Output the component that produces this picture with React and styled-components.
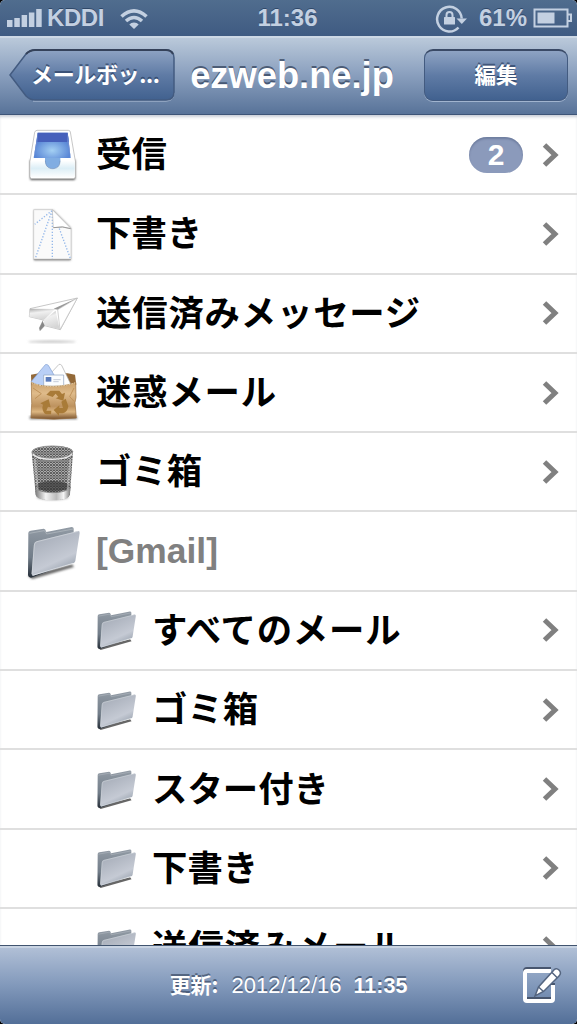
import React from "react";
import styled, { createGlobalStyle } from "styled-components";

const GlobalStyle = createGlobalStyle`
    * { box-sizing: border-box; }
    body {
        margin: 0;
        background: #000;
        font-family: "Liberation Sans", "Noto Sans CJK JP", sans-serif;
    }
`;

const Screen = styled.div`
    width: 577px;
    height: 1024px;
    display: flex;
    flex-direction: column;
    overflow: hidden;
    border-radius: 5px;
    background: #fff;
`;

// status bar
const StatusBar = styled.header`
    height: 36px;
    flex: none;
    display: grid;
    grid-template-columns: 1fr auto 1fr;
    align-items: center;
    padding: 0 5px 0 7px;
    background: linear-gradient(#506d8e, #3f5b82);
    color: #c3d0e1;
    font-size: 24px;
    font-weight: bold;
    line-height: 34px;
    text-shadow: 0 -1px 0 rgba(20, 40, 70, 0.5);
`;
const StatusGroup = styled.div`
    display: flex;
    align-items: center;
    justify-content: ${(props) => (props.$end ? "flex-end" : "flex-start")};
    height: 36px;
`;
const Carrier = styled.span`
    margin: 0 15px 0 5px;
    letter-spacing: -0.4px;
`;
const Clock = styled.span`
    margin-left: -4px;
`;
const Percent = styled.span`
    margin: 0 6px 0 12px;
`;

// navigation bar
const NavBar = styled.nav`
    height: 79px;
    flex: none;
    display: flex;
    align-items: flex-start;
    padding: 11px 9px 0 9px;
    border-top: 2px solid #cdd8e5;
    border-bottom: 1px solid #3e5578;
    background: linear-gradient(#bac9da, #8da2c0 45%, #587399);
`;
const BackButton = styled.button`
    position: relative;
    width: 166px;
    height: 53px;
    padding: 0 0 0 22px;
    border: 0;
    background: none;
    color: #fff;
    font: bold 22px/50px "Noto Sans CJK JP", sans-serif;
    text-align: left;
    white-space: nowrap;
    text-shadow: 0 -2px 0 rgba(35, 55, 90, 0.65);
`;
const BackShape = styled.svg`
    position: absolute;
    left: 0;
    top: 0;
`;
const BackLabel = styled.span`
    position: relative;
    top: -3px;
    letter-spacing: -0.35px;
`;
const Title = styled.h1`
    flex: 1;
    margin: 0;
    padding-right: 15px;
    color: #fff;
    font-size: 36.3px;
    line-height: 54px;
    text-align: center;
    text-shadow: 0 -2px 0 rgba(45, 60, 85, 0.7);
`;
const EditButton = styled.button`
    width: 144px;
    height: 52px;
    padding: 0;
    border: 1px solid #435b80;
    border-top: 2px solid #3a4a66;
    border-radius: 9px;
    background: linear-gradient(#8ea3c3, #5f7ba5 50%, #41618f);
    box-shadow: 0 1px 0 rgba(200, 215, 235, 0.6);
    color: #fff;
    font: bold 21.5px/43px "Noto Sans CJK JP", sans-serif;
    text-shadow: 0 -2px 0 rgba(35, 55, 90, 0.65);
    padding-bottom: 5px;
`;

// mailbox list
const List = styled.ul`
    flex: 1;
    min-height: 0;
    margin: 0;
    padding: 1px 0 0;
    overflow: hidden;
    list-style: none;
    background: #fff;
    box-shadow: inset 0 3px 3px -1px rgba(100, 115, 140, 0.35);
`;
const Row = styled.li`
    height: 79.3px;
    display: flex;
    align-items: center;
    padding: 0 18px 0 ${(props) => (props.$child ? "92px" : "22px")};
    border-bottom: 2px solid #dfdfdf;
`;
const IconBox = styled.span`
    flex: none;
    display: flex;
    width: ${(props) => (props.$child ? "60px" : "74px")};
    padding-top: ${(props) => (props.$child ? "4px" : "0")};
`;
const Label = styled.span`
    flex: 1;
    white-space: nowrap;
    color: ${(props) => (props.$muted ? "#808080" : "#000")};
    font-family: ${(props) => (props.$muted ? '"Liberation Sans"' : '"Noto Sans CJK JP"')}, sans-serif;
    font-size: 35.4px;
    font-weight: bold;
    line-height: 74px;
    letter-spacing: ${(props) => (props.$wide ? "0.8px" : "0")};
    padding-bottom: ${(props) => (props.$muted ? "0" : "5px")};
`;
const Badge = styled.span`
    width: 54px;
    height: 36px;
    margin-right: 18px;
    border-radius: 18px;
    background: #8b9abb;
    box-shadow: inset 0 2px 2px rgba(70, 85, 120, 0.4);
    color: #fff;
    font-size: 30px;
    font-weight: bold;
    line-height: 36px;
    text-align: center;
`;

// bottom toolbar
const Toolbar = styled.footer`
    height: 79px;
    flex: none;
    display: grid;
    grid-template-columns: 56px 1fr 56px;
    align-items: center;
    border-top: 1px solid #41546f;
    background: linear-gradient(#c9d4e3 0 2px, #b0bfd6 2px, #8299bb 50%, #536f98);
`;
const Updated = styled.p`
    grid-column: 2;
    margin: 0;
    color: #fff;
    font-size: 22px;
    line-height: 30px;
    text-align: center;
    white-space: nowrap;
    text-shadow: 0 -2px 0 rgba(45, 60, 85, 0.6);
`;
const UpdatedLabel = styled.b`
    font-family: "Noto Sans CJK JP", sans-serif;
    font-size: 21px;
    margin-right: 13px;
`;
const UpdatedTime = styled.b`
    font-size: 21.5px;
    margin-left: 12px;
`;

function SignalIcon() {
    return (
        <svg width="35" height="20" viewBox="0 0 35 20" fill="#c3d0e1">
            <path d="M0 12h5.5v7H0zM7.3 10h5.5v9H7.3zM14.6 7h5.5v12h-5.5zM21.9 4.500h5.500v14.500h-5.500zM29.200 1h5.500v18h-5.500z" />
        </svg>
    );
}

function WifiIcon() {
    return (
        <svg width="30" height="23" viewBox="0 0 30 23" fill="none" stroke="#c3d0e1" strokeWidth="3.600">
            <path d="M2.500 9.500Q15-1.800 27.500 9.500" />
            <path d="M7 14Q15 7 23 14" />
            <path d="M15 15.500q-3 0-4.700 2L15 22l4.700-4.500q-1.700-2-4.700-2z" fill="#c3d0e1" stroke="none" />
        </svg>
    );
}

function LockIcon() {
    return (
        <svg width="32" height="29" viewBox="0 0 32 29" fill="none" stroke="#c3d0e1">
            <path d="M23.500 23.500A12.300 12.300 0 1 1 26.700 14.500" strokeWidth="2.500" />
            <path d="M21.500 14.500h10.500l-5.200 5.500z" fill="#c3d0e1" stroke="none" />
            <rect x="9" y="13" width="11" height="7.500" rx=".5" fill="#c3d0e1" stroke="none" />
            <path d="M11.500 13v-2a3 3 0 0 1 6 0V13" strokeWidth="2" />
        </svg>
    );
}

function BatteryIcon() {
    return (
        <svg width="39" height="20" viewBox="0 0 39 20" fill="none" stroke="#c3d0e1" strokeWidth="2">
            <rect x="1.500" y="1.500" width="33" height="17" />
            <path d="M35 6.500h3v6.500h-3" />
            <rect x="4.500" y="4.500" width="17" height="11" fill="#c3d0e1" stroke="none" />
        </svg>
    );
}

// every big icon is drawn on a 180 x 231 grid
function BigIcon({ children }) {
    return (
        <svg width="60" height="77" viewBox="66 0 180 231">
            {children}
        </svg>
    );
}

function InboxIcon() {
    return (
        <BigIcon>
            <defs>
                <linearGradient id="trayFront" x2="0" y2="1">
                    <stop stopColor="#fff" />
                    <stop offset=".45" stopColor="#dceef6" />
                    <stop offset="1" stopColor="#fff" />
                </linearGradient>
                <radialGradient id="trayFloor" cy=".7">
                    <stop stopColor="#a4d0f3" />
                    <stop offset="1" stopColor="#5a87d6" />
                </radialGradient>
                <filter id="soft" x="-20%" width="140%" y="-20%" height="150%">
                    <feGaussianBlur stdDeviation="3" />
                </filter>
            </defs>
            <path d="M90 132h136v56q0 4-6 4H96q-6 0-6-4z" fill="#555" filter="url(#soft)" />
            <path d="M111 43h94q5 0 6 5l15 87v47q0 6-6 6H95q-5 0-5-6v-47l14-86q2-6 7-6z" fill="#fff" stroke="#aaa" strokeWidth="2" />
            <path d="M113 50h90l9 76H101z" fill="url(#trayFloor)" />
            <path d="M113 50h90l4 28h-97z" fill="#4660bb" />
            <path d="M113 50l-12 76 11-48zM203 50l9 76-10-48z" fill="#6f8dd2" />
            <path d="M92 134h43c1 18 10 25 23 25s22-7 23-25h43v46q0 5-6 5H97q-5 0-5-5z" fill="url(#trayFront)" />
            <path d="M135 126h46v7c-1 18-10 25-23 25s-22-7-23-25z" fill="#80ade2" />
            <path d="M136 134c1 18 10 24 22 24s22-6 22-24" fill="none" stroke="#718fb7" strokeWidth="2" />
        </BigIcon>
    );
}

function DraftIcon() {
    return (
        <BigIcon>
            <path d="M102 46h57l53 53v97H102z" fill="#777" filter="url(#soft)" />
            <path d="M101 44h56l56 55v93H101z" fill="#fafafa" stroke="#ccc" strokeWidth="2" />
            <path d="M101 194h112" stroke="#999" strokeWidth="2" />
            <g stroke="#94b8ea" strokeWidth="4" strokeDasharray="4 5" fill="none">
                <path d="M156 47L104 88M156 47L106 190M157 47v145M159 50l52 140" />
            </g>
            <path d="M157 44l3 54q28-5 53 3z" fill="#fff" stroke="#bbb" strokeWidth="2" />
            <path d="M160 98q29-6 52 3" fill="none" stroke="#999" strokeWidth="3" />
        </BigIcon>
    );
}

function SentIcon() {
    return (
        <BigIcon>
            <defs>
                <linearGradient id="wing" x2=".3" y2="1">
                    <stop stopColor="#aaa" />
                    <stop offset=".4" stopColor="#f0f0f0" />
                    <stop offset="1" stopColor="#d5d5d5" />
                </linearGradient>
            </defs>
            <ellipse cx="156" cy="200" rx="72" ry="4" fill="#ccc" filter="url(#soft)" />
            <path d="M232 69L90 101l-2 24 42 10-12 24 2 8 14-15 47 12z" fill="#fff" stroke="#aaa" strokeWidth="2" />
            <path d="M90 101l79 1-10 6-27 27-44-10z" fill="url(#wing)" />
            <path d="M132 135l35-28 12 56-47-12z" fill="url(#wing)" />
            <path d="M128 138l-10 21 2 8 14-15z" fill="#888" />
            <path d="M232 69l-71 32 12 3z" fill="#999" />
            <path d="M232 69l-59 35 7 60z" fill="#fff" stroke="#bbb" strokeWidth="2" />
        </BigIcon>
    );
}

function JunkIcon() {
    return (
        <BigIcon>
            <defs>
                <linearGradient id="bag" x2="0" y2="1">
                    <stop stopColor="#cba16c" />
                    <stop offset=".3" stopColor="#dfbb8a" />
                    <stop offset=".65" stopColor="#bd925f" />
                    <stop offset=".8" stopColor="#dcb681" />
                    <stop offset="1" stopColor="#77502c" />
                </linearGradient>
            </defs>
            <path d="M89 186h142v10H89z" fill="#888" filter="url(#soft)" />
            <path d="M93 62l24-4h86l22 4 4 30H94z" fill="#936938" />
            <path d="M139 72l38-41q4-1 8 3l30 62h-76z" fill="#fff" stroke="#aaa" strokeWidth="2" />
            <path d="M94 82l42-50q5-2 9 2l36 61H96z" fill="#b9cff6" stroke="#7f9dd0" strokeWidth="2" />
            <path d="M131 63h60v34h-60z" fill="#fbfdff" stroke="#8ca0bd" strokeWidth="2" />
            <path d="M137 69h17v14h-17z" fill="#5c7cbb" />
            <path d="M160 77h22M160 83h16" stroke="#c5ccda" strokeWidth="3" />
            <path d="M94 85q24 13 66 12t67-12l1 45-3 16 4 46q-68 7-136 0l2-44z" fill="url(#bag)" stroke="#9a7040" strokeWidth="2" />
            <path d="M95 86q25 12 65 11t66-11" fill="none" stroke="#f2ddb6" strokeWidth="3" strokeDasharray="5 3" />
            <path d="M99 102l25 17-19 15M222 102l-13 26 13 14" fill="none" stroke="#c0935b" strokeWidth="3" />
            <g fill="#a97b38">
                <path d="M139 122l12-12h27l8 10 9-4-5 24-23-7 8-4-8-10-9 10z" />
                <path d="M197 134l8 22q-3 20-17 22h-11v8l-16-18 17-14v8h11l-5-19z" />
                <path d="M153 181h-15q-9-4-11-20l2-9-8-4 25-12 6 24-8-2-5 12h15z" />
            </g>
        </BigIcon>
    );
}

function TrashIcon() {
    return (
        <BigIcon>
            <defs>
                <pattern id="mesh" width="9" height="8" patternUnits="userSpaceOnUse">
                    <path d="M0 0l9 8M9 0L0 8" stroke="#4f4f4f" strokeWidth="2.800" />
                </pattern>
                <linearGradient id="metal">
                    <stop stopColor="#777" />
                    <stop offset=".3" stopColor="#f3f3f3" />
                    <stop offset=".6" stopColor="#bbb" />
                    <stop offset=".8" stopColor="#f5f5f5" />
                    <stop offset="1" stopColor="#777" />
                </linearGradient>
            </defs>
            <ellipse cx="158" cy="192" rx="48" ry="9" fill="#aaa" filter="url(#soft)" />
            <path d="M95 57q2-15 62-18 55 0 62 16l-9 128q-4 18-52 18t-51-18z" fill="#e6e6e6" />
            <path d="M95 57q2-15 62-18 55 0 62 16l-9 128q-4 18-52 18t-51-18z" fill="url(#mesh)" />
            <ellipse cx="158" cy="160" rx="50" ry="16" fill="#333" opacity=".65" />
            <path d="M105 160q10 18 53 18t54-18l-3 26q-5 16-51 16t-51-16z" fill="url(#metal)" />
            <path d="M105 162q12 17 53 17t54-17" fill="none" stroke="#666" strokeWidth="2" />
            <ellipse cx="157" cy="57" rx="61" ry="18" fill="none" stroke="#909090" strokeWidth="3" />
            <path d="M98 63q13 16 59 16t60-17" fill="none" stroke="#e9e9e9" strokeWidth="4" />
            <path d="M105 78l8 92M211 78l-8 92" stroke="#eee" strokeWidth="6" opacity=".4" />
        </BigIcon>
    );
}

function FolderArt() {
    return (
        <>
            <defs>
                <linearGradient id="folderBack" x1="0" y1="0" x2="0" y2="1">
                    <stop stopColor="#929ba5" />
                    <stop offset=".6" stopColor="#727d89" />
                    <stop offset="1" stopColor="#252e38" />
                </linearGradient>
                <linearGradient id="folderFront" x2=".5" y2="1">
                    <stop stopColor="#9fa6b2" />
                    <stop offset=".75" stopColor="#c5cad4" />
                    <stop offset="1" stopColor="#9ba4b0" />
                </linearGradient>
                <filter id="folderBlur" x="-20%" width="140%" y="-20%" height="150%">
                    <feGaussianBlur stdDeviation="3" />
                </filter>
            </defs>
            <path d="M84 188l13 10 125-36-6-8z" fill="#666" filter="url(#folderBlur)" />
            <path d="M85 60q0-6 7-7l39-6q5 0 8 10l76-15q6 0 6 5v100L93 194q-9-2-9-9z" fill="url(#folderBack)" />
            <path d="M88 61l44-8q4 0 8 10l80-15" fill="none" stroke="#b5bcc3" strokeWidth="2" />
            <path d="M109 85l126-31q5 0 4 7l-13 83q-1 5-5 6L99 188q-4 0-4-6l7-88q1-7 7-9z" fill="url(#folderFront)" />
            <path d="M96 183l7-87q1-8 8-10l124-31" fill="none" stroke="#d5dade" strokeWidth="2" />
            <path d="M98 187l121-36" stroke="#edf0f5" strokeWidth="2" />
        </>
    );
}

function FolderIcon({ small }) {
    return small ? (
        <svg width="48" height="62" viewBox="62 0 194 250">
            <FolderArt />
        </svg>
    ) : (
        <BigIcon>
            <FolderArt />
        </BigIcon>
    );
}

function Chevron() {
    return (
        <svg width="18" height="26" viewBox="0 0 18 26" fill="none" stroke="#808080" strokeWidth="5">
            <path d="M3.500 3L14 13 3.500 23" />
        </svg>
    );
}

function ComposeIcon() {
    return (
        <svg width="42" height="40" viewBox="0 0 42 40">
            <path d="M30 4H6q-2 0-2 2v26q0 2 2 2h24q2 0 2-2V18" fill="none" stroke="#48566e" strokeWidth="4" />
            <path d="M30 6H6q-2 0-2 2v26q0 2 2 2h24q2 0 2-2V20" fill="none" stroke="#fff" strokeWidth="4" />
            <path d="M14 31l3.500-9L32 6q3-4 6-1t0 6L22.500 26.500z" fill="#fff" stroke="#546580" strokeWidth="1.500" />
            <path d="M31 7.500l5.500 5.500M17.500 22l5 4.500" stroke="#546580" strokeWidth="1.500" />
        </svg>
    );
}

const mailboxes = [
    { name: "受信", icon: <InboxIcon />, count: 2 },
    { name: "下書き", icon: <DraftIcon /> },
    { name: "送信済みメッセージ", icon: <SentIcon />, wide: true },
    { name: "迷惑メール", icon: <JunkIcon />, wide: true },
    { name: "ゴミ箱", icon: <TrashIcon /> },
    { name: "[Gmail]", icon: <FolderIcon />, muted: true },
    { name: "すべてのメール", child: true, wide: true },
    { name: "ゴミ箱", child: true },
    { name: "スター付き", child: true },
    { name: "下書き", child: true },
    { name: "送信済みメール", child: true, wide: true },
];

function MailboxRow({ box }) {
    return (
        <Row $child={box.child}>
            <IconBox $child={box.child}>{box.child ? <FolderIcon small /> : box.icon}</IconBox>
            <Label $muted={box.muted} $wide={box.wide}>{box.name}</Label>
            {box.count && <Badge>{box.count}</Badge>}
            {!box.muted && <Chevron />}
        </Row>
    );
}

export default function App() {
    return (
        <Screen>
            <GlobalStyle />
            <StatusBar>
                <StatusGroup>
                    <SignalIcon />
                    <Carrier>KDDI</Carrier>
                    <WifiIcon />
                </StatusGroup>
                <Clock>11:36</Clock>
                <StatusGroup $end>
                    <LockIcon />
                    <Percent>61%</Percent>
                    <BatteryIcon />
                </StatusGroup>
            </StatusBar>
            <NavBar>
                <BackButton>
                    <BackShape width="166" height="53" viewBox="0 0 166 53">
                        <defs>
                            <linearGradient id="back" x2="0" y2="1">
                                <stop stopColor="#8ea3c3" />
                                <stop offset=".5" stopColor="#5f7ba5" />
                                <stop offset="1" stopColor="#41618f" />
                            </linearGradient>
                        </defs>
                        <path d="M24 52h133q8 0 8-8" fill="none" stroke="#b4c4d9" />
                        <path d="M1 26L17 5q4-4 9-4h131q8 0 8 8v34q0 8-8 8H26q-5 0-9-4z" fill="url(#back)" stroke="#435b80" strokeWidth="1.500" />
                        <path d="M17 5q4-4 9-4h131q5 0 7 4" fill="none" stroke="#35425a" strokeWidth="2" />
                    </BackShape>
                    <BackLabel>メールボッ...</BackLabel>
                </BackButton>
                <Title>ezweb.ne.jp</Title>
                <EditButton>編集</EditButton>
            </NavBar>
            <List>
                {mailboxes.map((box, index) => (
                    <MailboxRow key={index} box={box} />
                ))}
            </List>
            <Toolbar>
                <Updated>
                    <UpdatedLabel>更新:</UpdatedLabel>
                    2012/12/16
                    <UpdatedTime>11:35</UpdatedTime>
                </Updated>
                <ComposeIcon />
            </Toolbar>
        </Screen>
    );
}
